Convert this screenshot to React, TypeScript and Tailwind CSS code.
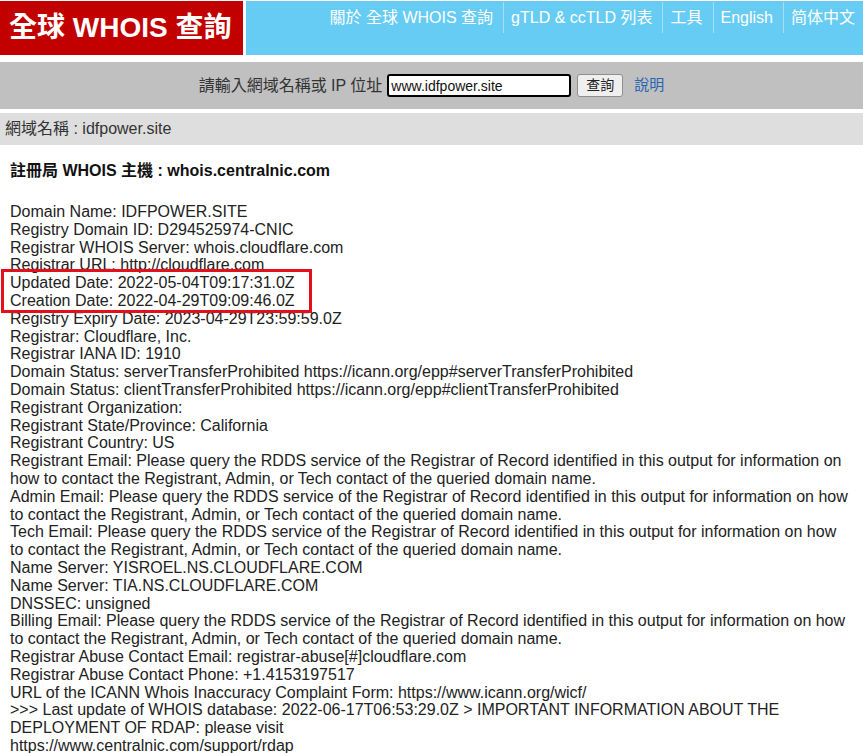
const FONT = "font-['Liberation_Sans','Noto_Sans_CJK_TC',sans-serif]"

const navItems = ["關於 全球 WHOIS 查詢", "gTLD & ccTLD 列表", "工具", "English", "简体中文"]

const whoisLines = [
  "Domain Name: IDFPOWER.SITE",
  "Registry Domain ID: D294525974-CNIC",
  "Registrar WHOIS Server: whois.cloudflare.com",
  "Registrar URL: http://cloudflare.com",
  "Updated Date: 2022-05-04T09:17:31.0Z",
  "Creation Date: 2022-04-29T09:09:46.0Z",
  "Registry Expiry Date: 2023-04-29T23:59:59.0Z",
  "Registrar: Cloudflare, Inc.",
  "Registrar IANA ID: 1910",
  "Domain Status: serverTransferProhibited https://icann.org/epp#serverTransferProhibited",
  "Domain Status: clientTransferProhibited https://icann.org/epp#clientTransferProhibited",
  "Registrant Organization:",
  "Registrant State/Province: California",
  "Registrant Country: US",
  "Registrant Email: Please query the RDDS service of the Registrar of Record identified in this output for information on how to contact the Registrant, Admin, or Tech contact of the queried domain name.",
  "Admin Email: Please query the RDDS service of the Registrar of Record identified in this output for information on how to contact the Registrant, Admin, or Tech contact of the queried domain name.",
  "Tech Email: Please query the RDDS service of the Registrar of Record identified in this output for information on how to contact the Registrant, Admin, or Tech contact of the queried domain name.",
  "Name Server: YISROEL.NS.CLOUDFLARE.COM",
  "Name Server: TIA.NS.CLOUDFLARE.COM",
  "DNSSEC: unsigned",
  "Billing Email: Please query the RDDS service of the Registrar of Record identified in this output for information on how to contact the Registrant, Admin, or Tech contact of the queried domain name.",
  "Registrar Abuse Contact Email: registrar-abuse[#]cloudflare.com",
  "Registrar Abuse Contact Phone: +1.4153197517",
  "URL of the ICANN Whois Inaccuracy Complaint Form: https://www.icann.org/wicf/",
  ">>> Last update of WHOIS database: 2022-06-17T06:53:29.0Z > IMPORTANT INFORMATION ABOUT THE DEPLOYMENT OF RDAP: please visit",
  "https://www.centralnic.com/support/rdap",
]

export default function App() {
  return (
    <div className={`${FONT} min-h-[753px] bg-white text-[#222]`}>
      {/* top banner */}
      <div className="flex gap-[3px] pt-px">
        <div className="flex h-[54px] w-[243px] items-center bg-[#c20000] pl-[9px] text-[28px] font-bold text-white">
          全球 WHOIS 查詢
        </div>
        <div className="flex h-[54px] flex-1 items-start justify-end bg-[#67ccf4]">
          {navItems.map((item, i) => (
            <div
              key={item}
              className={`mt-px h-[31px] whitespace-nowrap pl-[7px] text-[16px] leading-[32px] text-white ${
                i === navItems.length - 1 ? "pr-[8px]" : "pr-[10px]"
              } ${i > 0 ? "border-l border-[#a6def4]" : ""}`}
            >
              {item}
            </div>
          ))}
        </div>
      </div>

      {/* search bar */}
      <div className="mt-[7px] flex h-[47px] items-center justify-center bg-[#c0c0c0]">
        <span className="text-[16px] text-[#333]">請輸入網域名稱或 IP 位址</span>
        <input
          readOnly
          value="www.idfpower.site"
          className="ml-[5px] h-[23px] w-[184px] rounded-[3px] border-2 border-black bg-white pl-[2px] text-[14px] text-[#111] outline-none"
        />
        <button className="ml-[6px] h-[23px] w-[46px] rounded-[3px] border border-[#8f8f8f] bg-[#efefef] text-[14px] text-[#222]">
          查詢
        </button>
        <a className="ml-[11px] text-[15px] text-[#2a66b0]">說明</a>
      </div>

      {/* domain heading */}
      <div className="mt-[4px] flex h-[32px] items-center bg-[#dedede] pl-[5px] text-[16px] text-[#333]">
        網域名稱 : idfpower.site
      </div>

      <div className="relative pl-[10px] pr-[15px] pt-[17px]">
        <div className="text-[16px] font-bold leading-[18px] text-[#111]">
          註冊局 WHOIS 主機 : whois.centralnic.com
        </div>
        <div className="mt-[23px] text-[16px] leading-[17.8px]">
          {whoisLines.map((line, i) => (
            <div key={i}>{line}</div>
          ))}
        </div>
        {/* highlight around the date records */}
        <div className="absolute left-[1px] top-[124px] h-[44px] w-[311px] border-[3px] border-[#e3101b]" />
      </div>
    </div>
  )
}
